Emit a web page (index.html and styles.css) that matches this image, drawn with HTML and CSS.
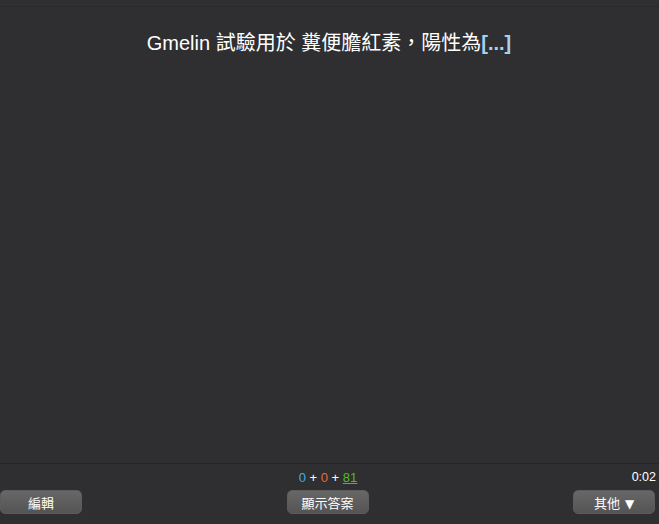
FILE: index.html
```html
<!DOCTYPE html>
<html>
<head>
<meta charset="utf-8">
<link rel="stylesheet" href="styles.css">
</head>
<body>
<div class="page">
  <div class="topline"></div>
  <main class="card">
    <div class="question">Gmelin 試驗用於 糞便膽紅素，陽性為<span class="cloze">[...]</span></div>
  </main>
  <footer class="bottombar">
    <div class="countsrow">
      <div class="side"></div>
      <div class="counts"><span class="new">0</span> + <span class="learn">0</span> + <span class="review">81</span></div>
      <div class="side timer">0:02</div>
    </div>
    <div class="buttons">
      <button class="btn">編輯</button>
      <button class="btn">顯示答案</button>
      <button class="btn">其他<span class="arrow">▼</span></button>
    </div>
  </footer>
</div>
</body>
</html>
```

FILE: styles.css
```css
html, body {
  margin: 0;
  padding: 0;
  background: #2f2f31;
}
body {
  font-family: "Liberation Sans", Arial, "Noto Sans CJK TC", sans-serif;
  color: #fff;
}
.page {
  height: 524px;
  display: flex;
  flex-direction: column;
}
.topline {
  height: 6px;
  border-bottom: 1px solid #29292b;
}
.card {
  flex: 1;
  display: flex;
  justify-content: center;
  padding-top: 23px;
}
.question {
  font-size: 20px;
  line-height: 26px;
  height: 26px;
  color: #ffffff;
  padding-right: 1px;
}
.cloze {
  font-weight: bold;
  color: #a6d2ef;
}
.bottombar {
  height: 60px;
  border-top: 1px solid #262628;
  display: flex;
  flex-direction: column;
}
.countsrow {
  display: flex;
  align-items: center;
  height: 25px;
  padding-top: 1px;
  box-sizing: border-box;
}
.side {
  flex: 1;
}
.counts {
  font-size: 13px;
  color: #fff;
}
.new { color: #4aa8e8; }
.learn { color: #e36b45; }
.review { color: #4fbf1a; text-decoration: underline; }
.timer {
  text-align: right;
  font-size: 12.5px;
  padding-right: 3px;
}
.buttons {
  display: flex;
  justify-content: space-between;
  padding: 1px 4px 0 0;
}
.btn {
  width: 82px;
  height: 24px;
  border: 1px solid #5c5c5c;
  border-radius: 5px;
  background: linear-gradient(#676767, #545454);
  color: #fff;
  font-family: "Liberation Sans", Arial, "Noto Sans CJK TC", sans-serif;
  font-size: 13px;
  font-weight: normal;
  padding: 0;
}
.arrow {
  font-family: "DejaVu Sans", sans-serif;
  font-size: 12px;
  margin-left: 5px;
}
```
